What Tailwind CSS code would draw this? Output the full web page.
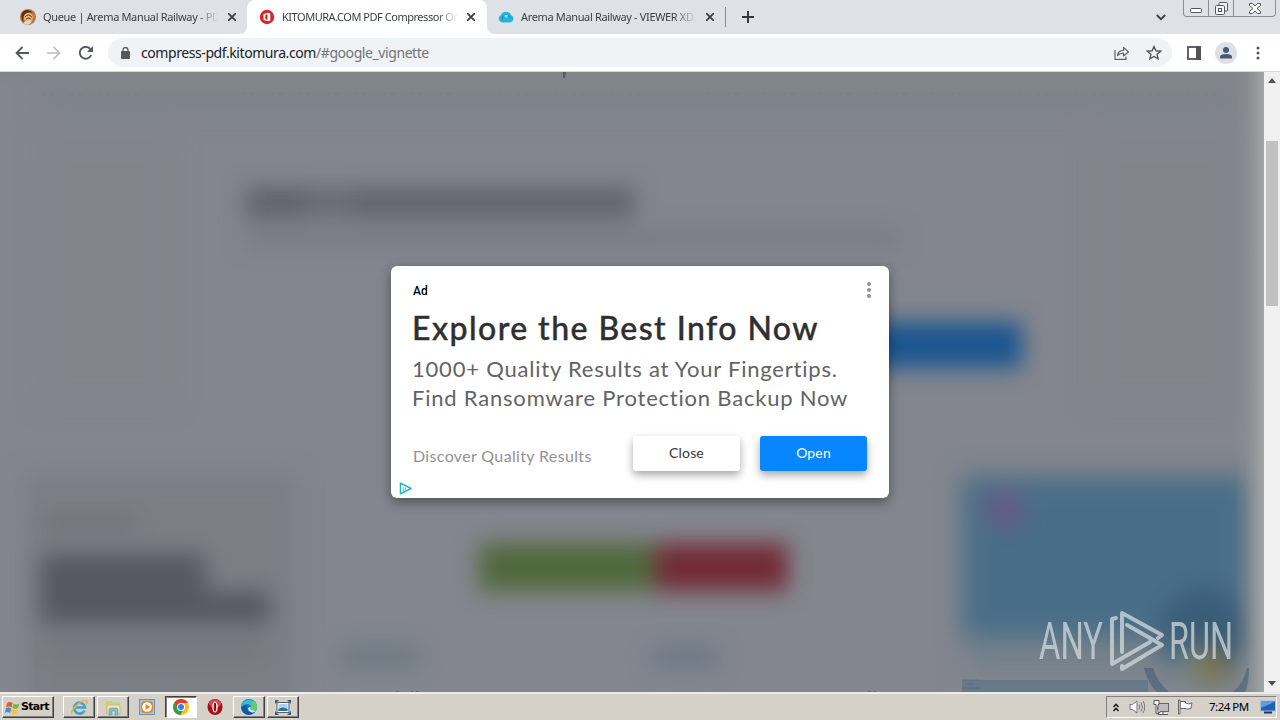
<!DOCTYPE html>
<html lang="en">
<head>
  <meta charset="UTF-8" />
  <meta name="viewport" content="width=device-width, initial-scale=1.0" />
  <script src="https://cdn.jsdelivr.net/npm/@tailwindcss/browser@4"></script>
  <title>KITOMURA.COM PDF Compressor Online</title>
</head>
<body class="w-[1280px] h-[720px] overflow-hidden flex flex-col bg-white font-['Noto_Sans',sans-serif]">

  <!-- Tab strip -->
  <div class="h-[34px] shrink-0 bg-[#dee1e6] flex items-stretch text-[#3c4043]">
    <div class="w-[247px] flex items-center pl-5 bg-[#dee1e6]">
      <svg class="w-4 h-4 shrink-0" viewBox="0 0 16 16">
        <circle cx="8" cy="8" r="8" fill="#b9793f" />
        <path d="M2 4Q0 9 4 14Q2 8 5 5Q8 2 13 4Q9-1 4 2z" fill="#5a2c14" />
        <circle cx="8.500" cy="8.500" r="4.500" fill="#e8b27c" />
        <path d="M5 8q3-4 7 0M6 10q3-2 5 0" stroke="#6d3a1c" fill="none" />
        <path d="M3 14q4-4 9-2l-2 3q-3 2-7-1z" fill="#ddd3c9" />
      </svg>
      <span class="ml-[7px] w-[175px] whitespace-nowrap text-[11px] tracking-[-0.34px] mask-r-from-88% mask-r-to-100%">Queue | Arema Manual Railway - PDF</span>
      <svg class="ml-[10px] w-2 h-2" viewBox="0 0 8 8"><path d="M0 0l8 8M8 0L0 8" stroke="#3c4043" stroke-width="1.800" /></svg>
    </div>
    <div class="w-[240px] flex items-center pl-3 bg-white rounded-t-lg relative">
      <svg class="absolute -left-2 bottom-0 w-2 h-2" viewBox="0 0 8 8"><path d="M8 0v8H0Q8 8 8 0" fill="#fff" /></svg>
      <svg class="absolute -right-2 bottom-0 w-2 h-2" viewBox="0 0 8 8"><path d="M0 0v8h8Q0 8 0 0" fill="#fff" /></svg>
      <svg class="w-4 h-4 shrink-0" viewBox="0 0 16 16">
        <circle cx="8" cy="8" r="7.200" fill="#d8232a" />
        <path fill-rule="evenodd" d="M4.500 5.200L9 3.700l2.300.9v6.800l-2.300.9-4.500-1.300zM6.300 6v4.200l2.200.6V5.300z" fill="#fff" />
      </svg>
      <span class="ml-[7px] w-[176px] whitespace-nowrap text-[11px] tracking-[-0.47px] mask-r-from-88% mask-r-to-100%">KITOMURA.COM PDF Compressor On</span>
      <svg class="ml-[9px] w-2 h-2" viewBox="0 0 8 8"><path d="M0 0l8 8M8 0L0 8" stroke="#3c4043" stroke-width="1.800" /></svg>
    </div>
    <div class="w-[238px] flex items-center pl-[11px]">
      <svg class="w-4 h-4 shrink-0" viewBox="0 0 16 16">
        <path d="M4 13.500a4 4 0 0 1-1-7.500A5.500 5.500 0 0 1 13 6a4 4 0 0 1-.5 7.500z" fill="#27b4dc" />
        <path d="M4.500 11.500a4 4 0 0 1 7.500-3" stroke="#0f92bd" stroke-width="1.200" fill="none" />
        <path d="M6 7q2-2 4-1l-1 3z" fill="#86e3f4" />
      </svg>
      <span class="ml-[7px] w-[175px] whitespace-nowrap text-[11px] tracking-[-0.35px] mask-r-from-88% mask-r-to-100%">Arema Manual Railway - VIEWER XD</span>
      <svg class="ml-[10px] w-2 h-2" viewBox="0 0 8 8"><path d="M0 0l8 8M8 0L0 8" stroke="#3c4043" stroke-width="1.800" /></svg>
    </div>
    <div class="w-px h-5 bg-[#898d93] mt-[7px]"></div>
    <svg class="ml-4 mt-[11px] w-3 h-3" viewBox="0 0 12 12"><path d="M6 0v12M0 6h12" stroke="#303338" stroke-width="1.900" /></svg>
    <svg class="ml-auto mt-[14px] w-[10px] h-[7px]" viewBox="0 0 10 7"><path d="M.8 1L5 5.200 9.200 1" stroke="#3c4043" stroke-width="1.800" fill="none" /></svg>
    <!-- Window controls -->
    <div class="ml-[17px] mr-1 w-[93px] h-[17px] flex border border-t-0 border-[#8b8e96] rounded-b-[4px]">
      <div class="w-[25px] border-r border-[#8b8e96] flex justify-center pt-2"><svg class="w-3 h-[5px]" viewBox="0 0 12 5"><rect x=".5" y=".5" width="11" height="4" rx="1" fill="#fff" stroke="#54575e" /></svg></div>
      <div class="w-[25px] border-r border-[#8b8e96] flex justify-center pt-[2px]"><svg class="w-[13px] h-[13px]" viewBox="0 0 13 13" fill="#f5f5f7" stroke="#54575e"><rect x="4" y=".5" width="8.500" height="8.500" rx="1" /><rect x=".5" y="3.500" width="9" height="9" rx="1" /><rect x="3.500" y="6.500" width="3" height="3" /></svg></div>
      <div class="grow flex justify-center pt-[3px]"><svg class="w-3 h-[11px]" viewBox="0 0 12 11"><path d="M.5.500h3L6 3 8.500.500h3v2L8 5.500l3.500 3v2h-3L6 8l-2.500 2.500h-3v-2L4 5.500l-3.500-3z" fill="#fff" stroke="#54575e" /></svg></div>
    </div>
  </div>

  <!-- Toolbar -->
  <div class="h-[38px] shrink-0 bg-white border-b border-[#d5d7da] flex items-center">
    <svg class="ml-[15px] w-[14px] h-[14px]" viewBox="0 0 14 14"><path d="M14 7H1.500M7.500 1l-6 6 6 6" stroke="#54575b" stroke-width="1.800" fill="none" /></svg>
    <svg class="ml-[18px] w-[14px] h-[14px]" viewBox="0 0 14 14"><path d="M0 7h12.500M6.500 1l6 6-6 6" stroke="#babcbe" stroke-width="1.700" fill="none" /></svg>
    <svg class="ml-[18px] w-[14px] h-[14px]" viewBox="0 0 14 14"><path d="M12.200 9A5.900 5.900 0 1 1 11.300 3" stroke="#54575b" stroke-width="1.900" fill="none" /><path d="M14 0v6H8z" fill="#54575b" /></svg>
    <div class="ml-[15px] w-[1064px] h-[29px] rounded-full bg-[#f0f3f5] flex items-center pl-[13px] pr-[10px]">
      <svg class="w-[9px] h-[12px]" viewBox="0 0 9 12"><rect y="4" width="9" height="8" rx="1" fill="#54575b" /><path d="M2 5V3a2.500 2.500 0 0 1 5 0v2" stroke="#54575b" stroke-width="1.300" fill="none" /></svg>
      <span class="ml-[11px] text-[14px] leading-5 tracking-[-0.42px] text-[#202124] whitespace-nowrap">compress-pdf.kitomura.com<span class="text-[#70757a]">/#google_vignette</span></span>
      <svg class="ml-auto w-[16px] h-[14px]" viewBox="0 0 16 14" fill="none" stroke="#5f6368" stroke-width="1.200"><path d="M1 4v9.300h11V10.500" /><path d="M3.500 9.500Q4 4.500 9.500 4.300V1.500L14.500 6l-5 4V7.200Q5.500 7.200 3.500 9.500z" stroke-linejoin="round" /></svg>
      <svg class="ml-[16px] w-[16px] h-[16px]" viewBox="0 0 16 16"><path d="M8 1.500l1.900 4.300 4.700.4-3.500 3.100 1 4.600L8 11.500l-4.100 2.400 1-4.600L1.400 6.200l4.700-.4z" fill="none" stroke="#54575b" stroke-width="1.400" /></svg>
    </div>
    <svg class="ml-[15px] w-[14px] h-[14px]" viewBox="0 0 14 14"><rect x="1" y="1" width="12" height="12" fill="none" stroke="#54515a" stroke-width="1.800" /><rect x="9" width="5" height="14" fill="#54515a" /></svg>
    <svg class="ml-[14px] w-[22px] h-[22px]" viewBox="0 0 22 22"><circle cx="11" cy="11" r="11" fill="#dde0e4" /><circle cx="11" cy="8" r="3" fill="#4b5671" /><path d="M5 16.500v-1.500q0-3 6-3t6 3v1.500z" fill="#4b5671" /></svg>
    <svg class="ml-[19px] w-[4px] h-[14px]" viewBox="0 0 4 14" fill="#54575b"><circle cx="2" cy="2" r="1.500" /><circle cx="2" cy="7" r="1.500" /><circle cx="2" cy="12" r="1.500" /></svg>
  </div>

  <!-- Page -->
  <div class="h-[620px] shrink-0 flex">
    <div class="w-[1264px] h-full relative overflow-hidden bg-[#83868e]">
      <!-- Blurred page behind the vignette ad -->
      <svg class="absolute inset-0 w-[1264px] h-[620px]" viewBox="0 72 1264 620">
        <defs>
          <filter id="soft" filterUnits="userSpaceOnUse" x="-60" y="12" width="1384" height="740" color-interpolation-filters="sRGB"><feGaussianBlur stdDeviation="11" /></filter>
          <filter id="wide" filterUnits="userSpaceOnUse" x="-60" y="12" width="1384" height="740" color-interpolation-filters="sRGB"><feGaussianBlur stdDeviation="13" /></filter>
          <linearGradient id="edge"><stop offset="0" stop-color="#9a9e9f" stop-opacity="0" /><stop offset=".4" stop-color="#9a9e9f" stop-opacity=".25" /><stop offset="1" stop-color="#a2a6a6" /></linearGradient>
          <linearGradient id="top" x1="0" y1="0" x2="0" y2="1"><stop offset="0" stop-color="#818682" /><stop offset="1" stop-color="#81848b" stop-opacity="0" /></linearGradient>
        </defs>
        <g filter="url(#soft)">
          <rect x="40" y="80" width="1200" height="38" fill="#7f838a" />
          <rect x="40" y="136" width="135" height="270" fill="#81848b" />
          <rect x="1090" y="136" width="150" height="270" fill="#81848b" />
        </g>
        <rect x="0" y="72" width="1264" height="14" fill="url(#top)" />
        <g filter="url(#soft)">
          <rect x="245" y="187" width="60" height="32" fill="#60636c" />
          <rect x="305" y="187" width="50" height="32" fill="#686b74" />
          <rect x="355" y="187" width="280" height="32" fill="#62656e" />
          <rect x="245" y="233" width="655" height="12" fill="#74777f" />
          <rect x="24" y="474" width="274" height="270" fill="#7b7e85" />
          <rect x="42" y="515" width="95" height="16" fill="#70737a" />
          <rect x="40" y="554" width="166" height="42" fill="#575962" />
          <rect x="40" y="591" width="230" height="33" fill="#575962" />
          <rect x="42" y="642" width="225" height="16" fill="#74777e" />
          <rect x="340" y="649" width="78" height="16" fill="#65767d" />
          <rect x="652" y="649" width="66" height="16" fill="#657484" />
        </g>
        <g filter="url(#soft)">
          <rect x="760" y="322" width="262" height="46" fill="#1b5590" />
          <rect x="479" y="543" width="175" height="48" fill="#50693c" />
          <rect x="655" y="543" width="133" height="48" fill="#722c37" />
        </g>
        <g filter="url(#wide)">
          <rect x="962" y="476" width="288" height="162" fill="#486e87" />
          <rect x="965" y="640" width="283" height="36" fill="#77828a" />
          <circle cx="1005" cy="510" r="18" fill="#715586" />
          <circle cx="1204" cy="634" r="45" fill="#3a5c76" />
          <circle cx="1202" cy="672" r="28" fill="#78868c" />
          <circle cx="1212" cy="666" r="17" fill="#7f7144" />
        </g>
        <rect x="1234" y="72" width="30" height="620" fill="url(#edge)" />
        <path d="M962 680h186v12H962z" fill="#4f6d83" opacity=".5" />
        <path d="M962 680h16M965 684h10M962 688h18" stroke="#35597a" opacity=".35" />
        <path d="M1144 668q4 16 13 24h12q-12-10-16-24zM1247 668q-4 16-14 24h12q4-8 4-24z" fill="#385774" opacity=".5" />
        <path d="M563 72h3l-1 6h-2z" fill="#4c5c72" />
        <path d="M43 95h100M243 94h210M490 95h150M700 94h260M1010 95h210" stroke="#73797f" stroke-width="3" stroke-dasharray="2 5 4 9 1 7" opacity=".18" />
        <path d="M396 691.500h3M411 691.500h2M416 691.500h3M868 691.500h3M874 691.500h2" stroke="#5e6975" />
      </svg>

      <!-- Watermark -->
      <svg class="absolute left-[1034px] top-[534px] w-[214px] h-[70px]" viewBox="1034 606 214 70" opacity=".75">
        <g fill="#d3dadf" font-family="Roboto, sans-serif" font-size="52" font-weight="400">
          <text x="1039" y="659" textLength="64" lengthAdjust="spacingAndGlyphs">ANY</text>
          <text x="1169" y="659" textLength="64" lengthAdjust="spacingAndGlyphs">RUN</text>
        </g>
        <g fill="none" stroke="#d3dadf" stroke-width="4" stroke-linejoin="round" stroke-linecap="round">
          <path d="M1116 618l-4 1v45l38-22" />
          <path d="M1122 652v-39l40 22-4 3" />
          <path d="M1127 625l35 20-40 24v-3" />
        </g>
      </svg>

      <!-- Ad dialog -->
      <div class="absolute left-[391px] top-[194px] w-[498px] h-[232px] bg-white rounded-md shadow-[0_4px_12px_rgba(0,0,0,0.4)] flex flex-col px-[22px] font-['Lato',sans-serif]">
        <div class="flex justify-between h-[43px] pt-4">
          <span class="text-[12px] leading-[18px] font-['Roboto',sans-serif] font-medium text-black">Ad</span>
          <svg class="-mr-[5px] w-[6px] h-4" viewBox="0 0 6 16" fill="#929292"><circle cx="3" cy="2" r="2" /><circle cx="3" cy="8" r="2" /><circle cx="3" cy="14" r="2" /></svg>
        </div>
        <h1 class="-ml-px text-[32px] leading-[38px] font-medium tracking-[1.44px] text-[#2f2f31] whitespace-nowrap [-webkit-text-stroke:0.4px_#2f2f31]">Explore the Best Info Now</h1>
        <p class="-ml-px mt-[7px] text-[22px] leading-[29px] tracking-[0.79px] text-[#636365] whitespace-nowrap">1000+ Quality Results at Your Fingertips.<br />Find Ransomware Protection Backup Now</p>
        <div class="mt-[24px] flex items-start">
          <span class="pt-[10px] text-[16px] leading-5 tracking-[0.35px] text-[#929292] whitespace-nowrap">Discover Quality Results</span>
          <button class="ml-auto w-[107px] h-[35px] pb-[2px] rounded-[3px] bg-white text-[14px] tracking-[0.15px] text-[#363638] shadow-[0_4px_9px_rgba(0,0,0,0.35)]">Close</button>
          <button class="ml-5 w-[107px] h-[35px] pb-[2px] rounded-[3px] bg-[#0786ff] text-[14px] tracking-[0.15px] text-white shadow-[0_4px_9px_rgba(0,0,0,0.35)]">Open</button>
        </div>
        <svg class="absolute left-2 bottom-[3px] w-[13px] h-[13px]" viewBox="0 0 13 13" fill="none" stroke="#1bb5c5"><path d="M1.500 1.200v10.600L12 6.500z" stroke-width="1.500" stroke-linejoin="round" /><path d="M4.500 5v5M6.500 8.500v-3" stroke-width="1.200" opacity=".7" /></svg>
      </div>
    </div>

    <!-- Scrollbar -->
    <div class="w-4 h-full bg-[#f1f1f1] flex flex-col items-center">
      <svg class="mt-[6px] w-2 h-[5px]" viewBox="0 0 8 5"><path d="M0 5l4-5 4 5z" fill="#505050" /></svg>
      <div class="mt-[58px] w-3 h-[165px] bg-[#c1c1c1]"></div>
      <svg class="mt-auto mb-[6px] w-2 h-[5px]" viewBox="0 0 8 5"><path d="M0 0l4 5 4-5z" fill="#505050" /></svg>
    </div>
  </div>

  <!-- Taskbar -->
  <div class="h-7 shrink-0 bg-[#d5d0c8] border-t-2 border-[#eeece8] flex items-start pt-[2px] pl-[2px] pr-[3px]">
    <div class="w-[52px] h-[22px] flex items-center pl-[2px] border border-t-white border-l-white border-r-[#404040] border-b-[#404040] shadow-[inset_-1px_-1px_0_#808080]">
      <svg class="w-[15px] h-[15px] shrink-0" viewBox="0 0 15 15"><path d="M2 3q3-2 5.500 0L6.500 7.500q-2.500-2-5.500 0z" fill="#e8562a" /><path d="M8.500 3.500q3 2 6 0L13 8q-3 1.500-5.500 0z" fill="#74b83e" /><path d="M.8 8.500q3-2 5.500 0L5 13q-2.500-2-5 0z" fill="#3f8ed8" /><path d="M7.200 9q3 2 5.500 0l-1.200 4.500q-3 1.500-5.500 0z" fill="#f7c42d" /></svg>
      <span class="ml-px text-[11px] font-bold tracking-[-0.7px] text-black font-['DejaVu_Sans',sans-serif]">Start</span>
    </div>
    <div class="ml-[9px] w-8 h-[22px] flex items-center justify-center border border-t-white border-l-white border-r-[#404040] border-b-[#404040] shadow-[inset_-1px_-1px_0_#808080]">
      <svg class="w-[18px] h-[18px]" viewBox="0 0 18 18" fill="none"><path d="M14.500 12.500A5.500 5.500 0 1 1 15 9.500H5" stroke="#3ba4de" stroke-width="2.700" /><path d="M2 16q-2-3 5-9t10-4q1 1-1 4" stroke="#e9b93b" stroke-width="1.500" /></svg>
    </div>
    <div class="ml-[2px] w-8 h-[22px] flex items-center justify-center border border-t-white border-l-white border-r-[#404040] border-b-[#404040] shadow-[inset_-1px_-1px_0_#808080]">
      <svg class="w-[18px] h-[18px]" viewBox="0 0 18 18"><path d="M2 3h6l1 2h7v11H2z" fill="#dfc471" /><path d="M4 4h11v10H4z" fill="#b8d89a" /><path d="M3 7h13v9H3z" fill="#f4e6a4" stroke="#c9a850" stroke-width=".6" /><path d="M5 17v-5q0-2 2-2h5q2 0 2 2v5h-3v-4H8v4z" fill="#79b9e4" stroke="#4a8cc0" stroke-width=".5" /></svg>
    </div>
    <svg class="ml-[10px] mt-[3px] w-4 h-4" viewBox="0 0 16 16"><rect x=".5" y=".5" width="15" height="15" fill="#9fcbe9" stroke="#5395c8" /><rect x="2" y="2" width="12" height="12" rx="3" fill="#ee8420" /><circle cx="8" cy="8" r="4.800" fill="#fff" /><path d="M6.500 5l4.500 3-4.500 3z" fill="#ed7c16" /></svg>
    <div class="ml-[10px] w-8 h-[22px] flex items-center justify-center bg-white border border-t-[#404040] border-l-[#404040] border-r-white border-b-white shadow-[inset_1px_1px_0_#808080]">
      <svg class="w-4 h-4" viewBox="0 0 16 16"><circle cx="8" cy="8" r="8" fill="#fbc116" /><path d="M1.100 4A8 8 0 0 1 15 4H8v4l-3.500 2z" fill="#e33b2e" /><path d="M1.100 4A8 8 0 0 0 7.200 16l4-6.500-3.200-1L5 10z" fill="#2da04a" /><circle cx="8" cy="8" r="4" fill="#fff" /><circle cx="8" cy="8" r="3" fill="#3a7ce8" /></svg>
    </div>
    <svg class="ml-[10px] mt-[3px] w-4 h-4" viewBox="0 0 16 16"><ellipse cx="8" cy="8" rx="7.500" ry="8" fill="#a80f16" /><ellipse cx="8" cy="4.500" rx="6" ry="4" fill="#cf4a4f" /><ellipse cx="8" cy="8" rx="2.800" ry="5.600" fill="#f8efef" /><ellipse cx="8" cy="8" rx="1.200" ry="4.600" fill="#8d0b12" /></svg>
    <div class="ml-[10px] w-8 h-[22px] flex items-center justify-center border border-t-white border-l-white border-r-[#404040] border-b-[#404040] shadow-[inset_-1px_-1px_0_#808080]">
      <svg class="w-4 h-4" viewBox="0 0 16 16"><circle cx="8" cy="8" r="8" fill="#1673c7" /><path d="M.5 6A8 8 0 0 1 16 8q0 4-5 3-2-1-1-3Q9 5 6 5 3 5 .3 8z" fill="#36bfd0" /><path d="M12 1.500Q16 4 16 8q0 4-5 3-2-1-1-3z" fill="#5fcf6a" /><path d="M9.500 8q-1 4 5.500 3.500-1 1.500-3 2-5-.5-5-4 .5-2 2.500-1.500z" fill="#d8e6ea" /><path d="M6 7q-2 5 6 7.500-4 2.500-8 .3Q0 12 .5 8 3 5.500 6 7z" fill="#1057a4" /></svg>
    </div>
    <div class="ml-[2px] w-8 h-[22px] flex items-center justify-center border border-t-white border-l-white border-r-[#404040] border-b-[#404040] shadow-[inset_-1px_-1px_0_#808080]">
      <svg class="w-4 h-[15px]" viewBox="0 0 16 15"><path d="M0 0h4L0 4zM16 0h-4l4 4zM0 15h4l-4-4zM16 15h-4l4-4z" fill="#405d70" /><rect x="2" y="2.500" width="12" height="10" fill="#f3f7fa" stroke="#486577" /><path d="M3.500 4h9v7h-9z" fill="#a9d2ec" /><path d="M3.500 9q4-3 9 0v2h-9z" fill="#2f6d9d" /></svg>
    </div>

    <!-- Tray -->
    <div class="ml-auto w-[171px] h-[22px] flex items-center border border-t-[#808080] border-l-[#808080] border-r-white border-b-white pl-[6px]">
      <svg class="w-[6px] h-[9px]" viewBox="0 0 6 9" fill="none" stroke="#111" stroke-width="1.400"><path d="M.5 4L3 1.200 5.500 4M.5 8L3 5.200 5.500 8" /></svg>
      <svg class="ml-[10px] w-4 h-4" viewBox="0 0 16 16" fill="none" stroke="#77777a"><path d="M1 5.500h2.500L8 2v12l-4.500-3.500H1z" fill="#fff" /><path d="M10 5.500q1.500 2.500 0 5M12 3.500q3 4.500 0 9M14 2q3.500 6 0 12" /></svg>
      <svg class="ml-2 w-4 h-4" viewBox="0 0 16 16" stroke="#55555a"><rect x="4.500" y="4.500" width="11" height="8" fill="#bdbdbd" stroke="#66666a" /><path d="M6 15h8" stroke="#fff" stroke-width="2" /><path d="M5 15.500h10M10 12.500V15" /><path d="M1 1.500h5v4H5v8h2M1 1.500v4h2v9h3" fill="#fff" /></svg>
      <svg class="ml-2 w-4 h-4" viewBox="0 0 16 16" stroke="#66666a"><path d="M3 2.500h5.500V4q3 2 6.500 0-1 3-1 5.500-4 1-6 0H3z" fill="#fff" /><path d="M1.500 1v14h1.500V1z" fill="#fff" /></svg>
      <span class="ml-[16px] w-[44px] text-[11.500px] tracking-[-0.5px] text-black whitespace-nowrap">7:24 PM</span>
      <svg class="ml-[7px] w-4 h-4" viewBox="0 0 16 16"><rect x=".5" y="2" width="15" height="10" fill="#1f61b5" stroke="#a9bdd4" /><path d="M1 2.500h14L1 9z" fill="#5da0df" /><path d="M4 13.500h8" stroke="#1d355d" stroke-width="2" /></svg>
    </div>
  </div>
</body>
</html>
